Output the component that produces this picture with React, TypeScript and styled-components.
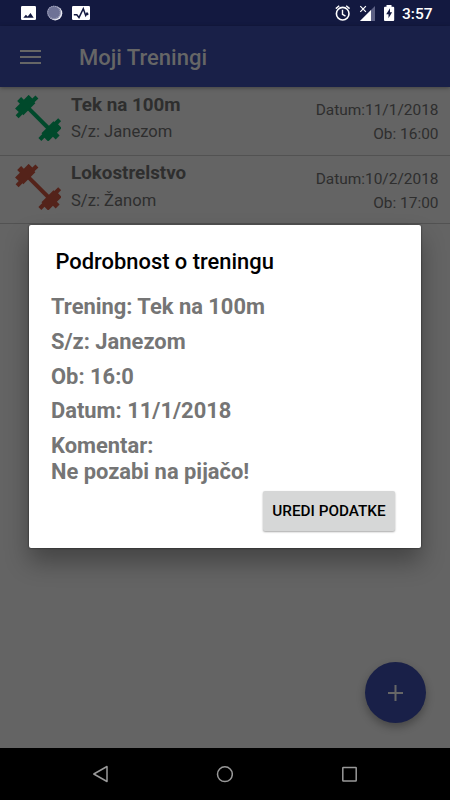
import React from "react";
import styled, { createGlobalStyle } from "styled-components";

const GlobalStyle = createGlobalStyle`
  *, *::before, *::after { box-sizing: border-box; }
  body { margin: 0; background: #646464; font-family: Roboto, "Liberation Sans", sans-serif; }
`;

const Screen = styled.div`
  position: relative;
  width: 450px;
  height: 800px;
  display: flex;
  flex-direction: column;
  overflow: hidden;
  background: #646464;
`;

const StatusBar = styled.header`
  height: 26px;
  flex: none;
  display: flex;
  justify-content: space-between;
  padding: 0 17px 0 20px;
  background: #131940;
  color: #fff;
`;

const StatusGroup = styled.div`
  display: flex;
  align-items: center;
  svg { display: block; }
`;

const Clock = styled.span`
  width: 31px;
  font-size: 15.5px;
  font-weight: 500;
  line-height: 26px;
  padding-top: 1px;
  white-space: nowrap;
`;

const AppBar = styled.div`
  position: relative;
  height: 61px;
  flex: none;
  display: flex;
  align-items: center;
  gap: 38px;
  padding-left: 20px;
  background: #192048;
  box-shadow: 0 1px 4px rgba(0, 0, 0, 0.35);
`;

const MenuButton = styled.button`
  display: flex;
  width: 21px;
  padding: 0;
  border: 0;
  background: none;
`;

const AppTitle = styled.h1`
  margin: 0;
  padding-top: 3px;
  color: #666;
  font-size: 22px;
  font-weight: 500;
  line-height: 28px;
`;

const List = styled.main`
  flex: 1;
`;

const Row = styled.article`
  height: 68.5px;
  display: flex;
  padding: 4px 11.5px 0 15px;
  border-bottom: 1px solid #525252;
`;

const RowIcon = styled.div`
  padding-top: 4px;
`;

const RowText = styled.div`
  flex: 1;
  padding-left: 10px;
`;

const RowTitle = styled.h2`
  margin: 0;
  padding-top: 0.6px;
  color: #2e2e2e;
  font-size: 18.8px;
  font-weight: 700;
  line-height: 27px;
`;

const RowSub = styled.p`
  margin: -0.6px 0 0;
  color: #2e2e2e;
  font-size: 16.6px;
  line-height: 27px;
`;

const RowMeta = styled.div`
  padding-top: 7px;
  text-align: right;
  color: #2e2e2e;
  font-size: 15.45px;
  line-height: 24px;
`;

const Fab = styled.button`
  position: absolute;
  right: 24px;
  bottom: 77px;
  width: 61px;
  height: 61px;
  display: flex;
  align-items: center;
  justify-content: center;
  padding: 0;
  border: 0;
  border-radius: 50%;
  background: #192048;
  box-shadow: 0 4px 8px rgba(0, 0, 0, 0.3);
`;

const NavBar = styled.nav`
  height: 52px;
  flex: none;
  display: flex;
  align-items: center;
  justify-content: space-between;
  padding: 0 92px;
  background: #000;
`;

const Dialog = styled.section`
  position: absolute;
  left: 29px;
  top: 225px;
  width: 392px;
  height: 323px;
  display: flex;
  flex-direction: column;
  padding: 22px 26px 0 22px;
  border-radius: 2px;
  background: #fff;
  box-shadow: 0 0 2px rgba(0, 0, 0, 0.75), 0 14px 24px rgba(0, 0, 0, 0.32);
`;

const DialogTitle = styled.h2`
  margin: 0 0 17.4px 4.5px;
  color: #000;
  font-size: 21.9px;
  font-weight: 500;
  line-height: 30px;
`;

const Detail = styled.p`
  margin: 0 0 8.7px;
  color: #757575;
  font-size: 21.9px;
  font-weight: 700;
  line-height: 26px;
`;

const EditButton = styled.button`
  align-self: flex-end;
  width: 132px;
  height: 40px;
  margin-top: -2.4px;
  padding: 0;
  border: 0;
  border-radius: 2px;
  background: #d6d7d7;
  box-shadow: 0 1px 2px rgba(0, 0, 0, 0.35);
  color: #000;
  font-family: inherit;
  font-size: 15.3px;
  font-weight: 500;
  white-space: nowrap;
`;

const Dumbbell = ({ color }: { color: string }) => (
  <svg width="46" height="46" viewBox="-23 -23 46 46" fill={color}>
    <g transform="translate(0.4 0.2) rotate(45)">
      <rect x="-16" y="-2" width="32" height="4" />
      {[0, 180].map((angle) => (
        <path
          key={angle}
          transform={`rotate(${angle})`}
          d="M-14-14V-8.500H-12.800V8.500H-14V14H-18.200V9.600H-23.400V2.800H-27.200V-2.800H-23.400V-9.600H-18.200V-14z"
        />
      ))}
    </g>
  </svg>
);

const NotificationIcons = () => (
  <svg width="72" height="26" viewBox="20 0 72 26">
    <rect x="21" y="6" width="15" height="14" rx="1.2" fill="#fff" />
    <path d="M23.300 17.700l2.600-3 1.800 1.800 2.800-3.500 3.200 4.700z" fill="#131940" />
    <circle cx="55.2" cy="13.3" r="7.1" fill="#e8e9f2" />
    <circle cx="54" cy="12.5" r="6.8" fill="#6e7296" />
    <circle cx="54" cy="12.5" r="6.3" fill="none" stroke="#a7a9c0" strokeWidth="1.1" strokeDasharray="1.2 .8" />
    <rect x="72" y="6" width="18" height="14" rx="1.2" fill="#fff" />
    <path d="M73.800 14.800h3l2.200 2.700 4.300-8.800 2.400 6.800 1.800-3" fill="none" stroke="#131940" strokeWidth="1.5" />
    <circle cx="87.400" cy="14.200" r="1.100" fill="#131940" />
  </svg>
);

const SystemIcons = () => (
  <svg width="67" height="26" viewBox="335 0 67 26">
    <g fill="none" stroke="#fff" strokeWidth="1.6">
      <circle cx="342.7" cy="13.7" r="6.3" />
      <path d="M342.5 9.7v4.6l3 1.8M335.8 8.6l3.4-2.9M346.2 5.7l3.4 2.9" strokeWidth="1.4" />
    </g>
    <path d="M375 6v15h-15z" fill="#5d6184" />
    <path d="M371 10v11h-11z" fill="#fff" />
    <path d="M360.3 6.2l5.6 5.6M365.9 6.2l-5.6 5.6" stroke="#fff" strokeWidth="1.2" />
    <path d="M386.500 5h5v1.700h1.700q1 0 1 1V20q0 1-1 1h-8.200q-1 0-1-1V7.700q0-1 1-1h1.500z" fill="#fff" />
    <path d="M390 8.300l-3.800 6h2.300v4l3.600-6h-2.100z" fill="#131940" />
  </svg>
);

const trainings = [
  { title: "Tek na 100m", partner: "Janezom", date: "11/1/2018", time: "16:00", color: "#00492b" },
  { title: "Lokostrelstvo", partner: "Žanom", date: "10/2/2018", time: "17:00", color: "#54231a" },
];

export default function App() {
  return (
    <Screen>
      <GlobalStyle />
      <StatusBar>
        <StatusGroup><NotificationIcons /></StatusGroup>
        <StatusGroup><SystemIcons /><Clock>3:57</Clock></StatusGroup>
      </StatusBar>
      <AppBar>
        <MenuButton aria-label="Menu">
          <svg width="21" height="16" viewBox="0 0 21 16" fill="#666">
            <path d="M0 1h21v2H0zM0 7h21v2H0zM0 13h21v2H0z" />
          </svg>
        </MenuButton>
        <AppTitle>Moji Treningi</AppTitle>
      </AppBar>
      <List>
        {trainings.map((t) => (
          <Row key={t.title}>
            <RowIcon><Dumbbell color={t.color} /></RowIcon>
            <RowText>
              <RowTitle>{t.title}</RowTitle>
              <RowSub>S/z: {t.partner}</RowSub>
            </RowText>
            <RowMeta>Datum:{t.date}<br />Ob: {t.time}</RowMeta>
          </Row>
        ))}
      </List>
      <NavBar>
        <svg width="16" height="18" viewBox="0 0 16 18" fill="none" stroke="#999" strokeWidth="1.5">
          <path d="M15 1.500v15L1.800 9z" strokeLinejoin="round" />
        </svg>
        <svg width="17" height="17" viewBox="0 0 17 17" fill="none" stroke="#999" strokeWidth="1.5">
          <circle cx="8.900" cy="8.200" r="7.400" />
        </svg>
        <svg width="17" height="17" viewBox="0 0 17 17" fill="none" stroke="#999" strokeWidth="1.5">
          <rect x="1.800" y="1.500" width="13.400" height="13.400" rx=".5" />
        </svg>
      </NavBar>
      <Fab aria-label="Dodaj">
        <svg width="16" height="16" viewBox="0 0 16 16" stroke="#666" strokeWidth="2">
          <path d="M7.500 0v16M0 8h15" />
        </svg>
      </Fab>
      <Dialog role="dialog">
        <DialogTitle>Podrobnost o treningu</DialogTitle>
        <Detail>Trening: Tek na 100m</Detail>
        <Detail>S/z: Janezom</Detail>
        <Detail>Ob: 16:0</Detail>
        <Detail>Datum: 11/1/2018</Detail>
        <Detail>Komentar:<br />Ne pozabi na pijačo!</Detail>
        <EditButton>UREDI PODATKE</EditButton>
      </Dialog>
    </Screen>
  );
}
